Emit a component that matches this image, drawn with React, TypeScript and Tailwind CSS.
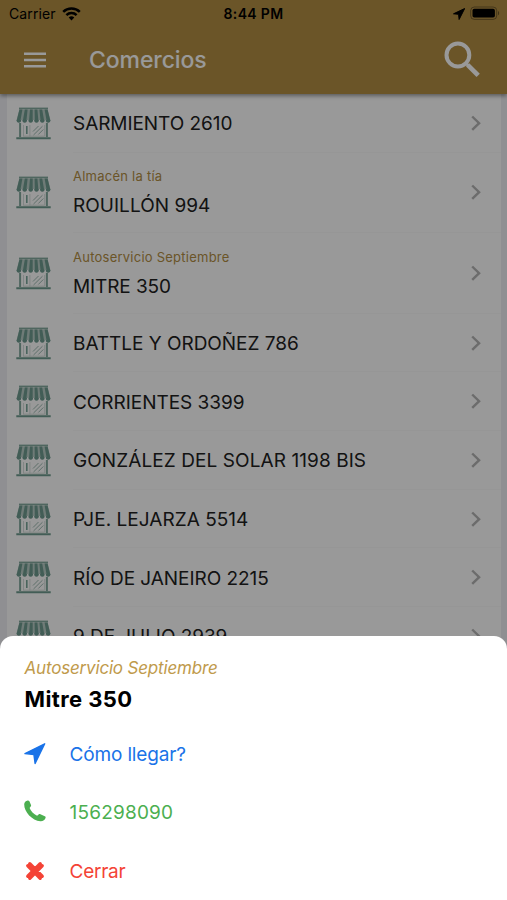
import type { ReactNode } from "react";

interface Shop {
  address: string;
  name?: string;
  tracking: string;
}

const SHOPS: Shop[] = [
  { address: "SARMIENTO 2610", tracking: "tracking-[-0.06px]" },
  { address: "ROUILLÓN 994", name: "Almacén la tía", tracking: "tracking-[0.03px]" },
  { address: "MITRE 350", name: "Autoservicio Septiembre", tracking: "tracking-[-0.1px]" },
  { address: "BATTLE Y ORDOÑEZ 786", tracking: "tracking-[-0.03px]" },
  { address: "CORRIENTES 3399", tracking: "tracking-[-0.03px]" },
  { address: "GONZÁLEZ DEL SOLAR 1198 BIS", tracking: "tracking-[0.08px]" },
  { address: "PJE. LEJARZA 5514", tracking: "tracking-[0.03px]" },
  { address: "RÍO DE JANEIRO 2215", tracking: "tracking-[-0.05px]" },
  { address: "9 DE JULIO 2939", tracking: "tracking-[-0.06px]" },
];

function StoreIcon() {
  return (
    <svg width="35" height="33" viewBox="0 0 35 33" fill="none" className="shrink-0">
      {/* awning */}
      <path d="M3 .6h29v1.8H3z" fill="#84ab9f" />
      <path d="M3.4 2.4h28.2L34.4 13H.6z" fill="#b9cdc7" />
      <path
        d="M3.4 2.4h3L4.4 14H.6zM8.8 2.4h2.8L10.4 14H6.8zM14 2.4h2.7V14H13zM18.6 2.4h2.8L22.4 14h-3.6zM23.4 2.4h2.8L28.2 14h-3.6zM28.6 2.4h3L34.4 14h-3.8z"
        fill="#6f9c90"
      />
      <path
        d="M.6 13h4.6a2.3 2.8 0 0 1-4.6 0zM6.4 13H11a2.3 2.8 0 0 1-4.6 0zM12.4 13H17a2.3 2.8 0 0 1-4.6 0zM18.2 13h4.6a2.3 2.8 0 0 1-4.6 0zM24 13h4.6a2.3 2.8 0 0 1-4.6 0zM29.8 13h4.6a2.3 2.8 0 0 1-4.6 0z"
        fill="#6f9c90"
      />
      {/* walls, door and window */}
      <path d="M4.1 16v14M30.9 16v14" stroke="#84ab9f" strokeWidth="2" />
      <path d="M7.5 18v11.5M13.9 18v11.5M7.5 29.2h21.2V18" stroke="#ccd8d4" strokeWidth=".8" />
      <path d="M10.8 19v8" stroke="#7ba79a" strokeWidth="1.6" />
      <path d="M17 24.5l5.5-5.5M17.5 28l9-8.8M22.3 27.5l5-5" stroke="#9dbbb2" />
      <path d="M.3 30.2h34.4v2H.3z" fill="#6f9c8f" />
    </svg>
  );
}

function ShopRow({ shop }: { shop: Shop }) {
  return (
    <li className={`flex shrink-0 items-center pl-[9px] ${shop.name ? "h-[80.6px]" : "h-[58.65px]"}`}>
      <StoreIcon />
      <div className="ml-[22px] flex h-full min-w-0 flex-1 items-center justify-between border-b border-[#fbfbfb] pr-5">
        <div className={`flex flex-col ${shop.name ? "pt-[3px]" : "pt-[2px]"}`}>
          {shop.name && (
            <span className="mb-1 text-[13px] leading-[20px] tracking-[0.24px] whitespace-nowrap text-[#b28e44]">
              {shop.name}
            </span>
          )}
          <span className={`text-[19px] leading-[31px] whitespace-nowrap text-[#212121] ${shop.tracking}`}>
            {shop.address}
          </span>
        </div>
        <svg width="10" height="16" viewBox="0 0 10 16" fill="none" stroke="#b4b4b4" strokeWidth="2.4">
          <path d="M1.2 1.5l6.9 6.7-6.9 6.7" />
        </svg>
      </div>
    </li>
  );
}

function StatusBar() {
  return (
    <div className="grid h-[27px] grid-cols-3 items-center px-[9px] text-black">
      <div className="flex items-center gap-[6px]">
        <span className="text-[14px] tracking-[0.1px]">Carrier</span>
        <svg width="19" height="14" viewBox="0 0 19 14" fill="none" stroke="#000" strokeWidth="2.5">
          <path d="M1.2 4.9a11.8 11.8 0 0 1 16.6 0" />
          <path d="M4.4 8.1a7.2 7.2 0 0 1 10.2 0" />
          <path d="M9.5 13.5L6.7 10.6a4 4 0 0 1 5.6 0z" fill="#000" stroke="none" />
        </svg>
      </div>
      <span className="text-center text-[14px] font-semibold tracking-[0.35px] whitespace-nowrap">8:44 PM</span>
      <div className="flex items-center justify-end gap-[5px]">
        <svg width="12" height="12" viewBox="0 0 12 12">
          <path d="M11.7.5L.5 5.8l5.1.5.5 5.2z" stroke="#000" strokeLinejoin="round" />
        </svg>
        <svg width="31" height="15" viewBox="0 0 31 15" className="-mr-[3px]">
          <rect x=".7" y="1" width="26" height="12.4" rx="3.6" fill="none" stroke="#000" strokeOpacity=".35" />
          <rect x="2.5" y="2.8" width="22.4" height="8.8" rx="1.8" />
          <path d="M28 5.1c1.6.6 1.6 3.6 0 4.2z" fillOpacity=".4" />
        </svg>
      </div>
    </div>
  );
}

function Header() {
  return (
    <header className="relative z-10 h-[94px] shrink-0 bg-[#b28e44] shadow-[0_2px_4px_rgba(0,0,0,0.4)]">
      <StatusBar />
      <div className="flex h-[66px] items-center pr-[26px] pl-6">
        <svg width="22" height="16" viewBox="0 0 22 16" fill="#fff" className="shrink-0">
          <path d="M0 .5h22v2.4H0zM0 6.8h22v2.4H0zM0 13.1h22v2.4H0z" />
        </svg>
        <h1 className="ml-[43px] flex-1 text-[23px] font-medium tracking-[-0.1px] text-white">Comercios</h1>
        <svg width="37" height="36" viewBox="0 0 37 36" fill="none" stroke="#fff" className="-mt-[2px]">
          <circle cx="13.9" cy="14" r="11.4" strokeWidth="4" />
          <path d="M21.5 21.8l4 4" strokeWidth="3" />
          <path d="M23.6 23.8l10.6 10.6" strokeWidth="4.6" />
        </svg>
      </div>
    </header>
  );
}

interface SheetActionProps {
  icon: ReactNode;
  color: string;
  tracking: string;
  children: ReactNode;
}

function SheetAction({ icon, color, tracking, children }: SheetActionProps) {
  return (
    <button className={`flex h-[58.6px] w-full items-center text-left text-[19px] ${color}`}>
      <span className="flex w-[45px] items-center">{icon}</span>
      <span className={`pt-[1.5px] ${tracking}`}>{children}</span>
    </button>
  );
}

function ShopSheet() {
  return (
    <section className="absolute inset-x-0 bottom-0 z-30 h-[264px] rounded-t-[13px] bg-white pl-[24.5px]">
      <p className="pt-5 text-[17px] leading-6 tracking-[-0.18px] text-[#c09a4b] italic">Autoservicio Septiembre</p>
      <h2 className="text-[22px] leading-[38px] font-bold tracking-[0.4px] text-black">Mitre 350</h2>
      <div className="mt-[7px] flex flex-col">
        <SheetAction
          color="text-[#1a73e8]"
          tracking="tracking-[-0.15px]"
          icon={
            <svg width="22" height="22" viewBox="0 0 22 22" fill="currentColor" className="-ml-[0.5px]">
              <path d="M20.7.8L1 10.6l8.9.9 1.2 9z" stroke="currentColor" strokeWidth="1.4" strokeLinejoin="round" />
            </svg>
          }
        >
          Cómo llegar?
        </SheetAction>
        <SheetAction
          color="text-[#4caf50]"
          tracking="tracking-[0.2px]"
          icon={
            <svg width="22" height="22" viewBox="0 0 22 22" fill="currentColor" className="-mt-[3px] -ml-[0.5px]">
              <path d="M.2 4.3C.2 2.300 1.700.700 3.700.400c.8-.1 1.300.2 1.700.8l1.500 3.500c.4.8.2 1.400-.4 2L5.600 8.100c1.200 3.100 4.100 6.200 7.500 7.700l1.500-1.300c.5-.5 1.100-.6 1.800-.3l4.400 2.100c.7.3 1 .8.8 1.500-.6 2.300-2.800 3.700-5.200 3.500C8.200 20.600 0 12 .2 4.300z" />
            </svg>
          }
        >
          156298090
        </SheetAction>
        <SheetAction
          color="text-[#f44336]"
          tracking="tracking-[-0.25px]"
          icon={
            <svg width="20" height="20" viewBox="0 0 20 20" fill="none" className="ml-[0.5px]">
              <path
                d="M4.8 2.8l12.4 12.4M2.8 4.8l12.4 12.4M15.2 2.8L2.8 15.2M17.2 4.800L4.800 17.200"
                stroke="currentColor"
                strokeWidth="3.4"
                strokeLinecap="round"
              />
            </svg>
          }
        >
          Cerrar
        </SheetAction>
      </div>
    </section>
  );
}

export default function App() {
  return (
    <div className="relative flex h-[900px] w-[507px] flex-col overflow-hidden bg-[#efeff4] font-['Inter','Liberation_Sans',sans-serif]">
      <Header />
      <ul className="mr-[6px] ml-[7px] flex min-h-0 flex-1 flex-col overflow-hidden bg-white">
        {SHOPS.map((shop) => (
          <ShopRow key={shop.address} shop={shop} />
        ))}
      </ul>
      <div className="absolute inset-0 z-20 bg-black/40" />
      <ShopSheet />
    </div>
  );
}
